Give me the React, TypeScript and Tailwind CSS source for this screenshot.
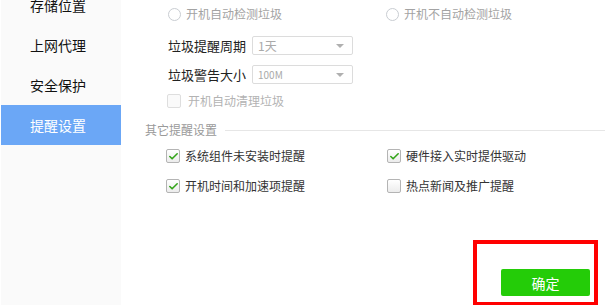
import { Check } from "lucide-react";

const navItems = ["存储位置", "上网代理", "安全保护", "提醒设置"];

function Radio({ label }: { label: string }) {
    return (
        <div className="flex items-center h-[20px]">
            <span className="w-[13px] h-[13px] rounded-full border border-[#c9cdd2] bg-white" />
            <span className="ml-[5px] text-[12px] text-[#a3a3a3]">{label}</span>
        </div>
    );
}

function Box({ checked, disabled }: { checked?: boolean; disabled?: boolean }) {
    return (
        <span
            className={
                "w-[14px] h-[14px] rounded-[2px] border flex items-center justify-center " +
                (disabled
                    ? "border-[#dedede] bg-[#fafafa]"
                    : "border-[#b4b4b4] bg-gradient-to-b from-white to-[#ececec]")
            }
        >
            {checked && <Check size={11} strokeWidth={3.5} className="text-[#34a51a]" />}
        </span>
    );
}

function CheckRow({ label, checked }: { label: string; checked?: boolean }) {
    return (
        <div className="flex items-center h-[20px]">
            <Box checked={checked} />
            <span className="ml-[5px] text-[12px] text-[#333]">{label}</span>
        </div>
    );
}

function Select({ value, small }: { value: string; small?: boolean }) {
    return (
        <div className="ml-[4px] w-[101px] h-[19px] border border-[#dcdcdc] rounded-[2px] bg-white flex items-center pl-[5px] pr-[8px]">
            <span className={(small ? "text-[10px]" : "text-[12px]") + " text-[#aaaaaa] flex-1 leading-none"}>
                {value}
            </span>
            <span className="w-0 h-0 border-l-[4px] border-r-[4px] border-t-[4px] border-l-transparent border-r-transparent border-t-[#b0b0b0]" />
        </div>
    );
}

function Sidebar() {
    return (
        <div className="ml-[1px] w-[120px] h-full bg-[#fafafa] shrink-0">
            <div className="-mt-[15px]">
                {navItems.map((item, i) => {
                    const active = i === navItems.length - 1;
                    return (
                        <div
                            key={item}
                            className={
                                "h-[40px] flex items-center pl-[29px] text-[14px] " +
                                (active ? "bg-[#6ba7f6] text-white" : "text-[#111]")
                            }
                        >
                            {item}
                        </div>
                    );
                })}
            </div>
        </div>
    );
}

export default function App() {
    return (
        <div
            className="w-[605px] h-[305px] overflow-hidden bg-white flex"
            style={{ fontFamily: '"Noto Sans CJK SC", sans-serif' }}
        >
            <Sidebar />

            <div className="flex-1 flex flex-col">
                {/* auto scan radios */}
                <div className="mt-[4px] flex pl-[47px]">
                    <div className="w-[218px]">
                        <Radio label="开机自动检测垃圾" />
                    </div>
                    <Radio label="开机不自动检测垃圾" />
                </div>

                <div className="mt-[12px] flex items-center pl-[47px] h-[19px]">
                    <span className="w-[80px] text-[13px] text-[#222]">垃圾提醒周期</span>
                    <Select value="1天" />
                </div>
                <div className="mt-[10px] flex items-center pl-[47px] h-[19px]">
                    <span className="w-[80px] text-[13px] text-[#222]">垃圾警告大小</span>
                    <Select value="100M" small />
                </div>

                <div className="mt-[8px] flex items-center h-[20px] pl-[46px]">
                    <Box disabled />
                    <span className="ml-[7px] text-[12px] text-[#b3b3b3]">开机自动清理垃圾</span>
                </div>

                {/* other reminders */}
                <div className="mt-[11px] flex items-center h-[20px] pl-[24px]">
                    <span className="text-[12px] text-[#9a9a9a]">其它提醒设置</span>
                    <span className="ml-[8px] flex-1 h-px bg-[#e6e6e6]" />
                </div>

                <div className="mt-[7px] grid grid-cols-[221px_1fr] gap-y-[10px] pl-[45px]">
                    <CheckRow label="系统组件未安装时提醒" checked />
                    <CheckRow label="硬件接入实时提供驱动" checked />
                    <CheckRow label="开机时间和加速项提醒" checked />
                    <CheckRow label="热点新闻及推广提醒" />
                </div>

                <div className="mt-[44px] flex justify-end pr-[7px]">
                    <div className="w-[125px] h-[66px] shrink-0 border-4 border-[#ff0000] flex justify-end pt-[25px] pr-[4px]">
                        <button className="w-[89px] h-[27px] rounded-[2px] bg-[#24cc08] text-white text-[14px] leading-none">
                            确定
                        </button>
                    </div>
                </div>
            </div>
        </div>
    );
}
